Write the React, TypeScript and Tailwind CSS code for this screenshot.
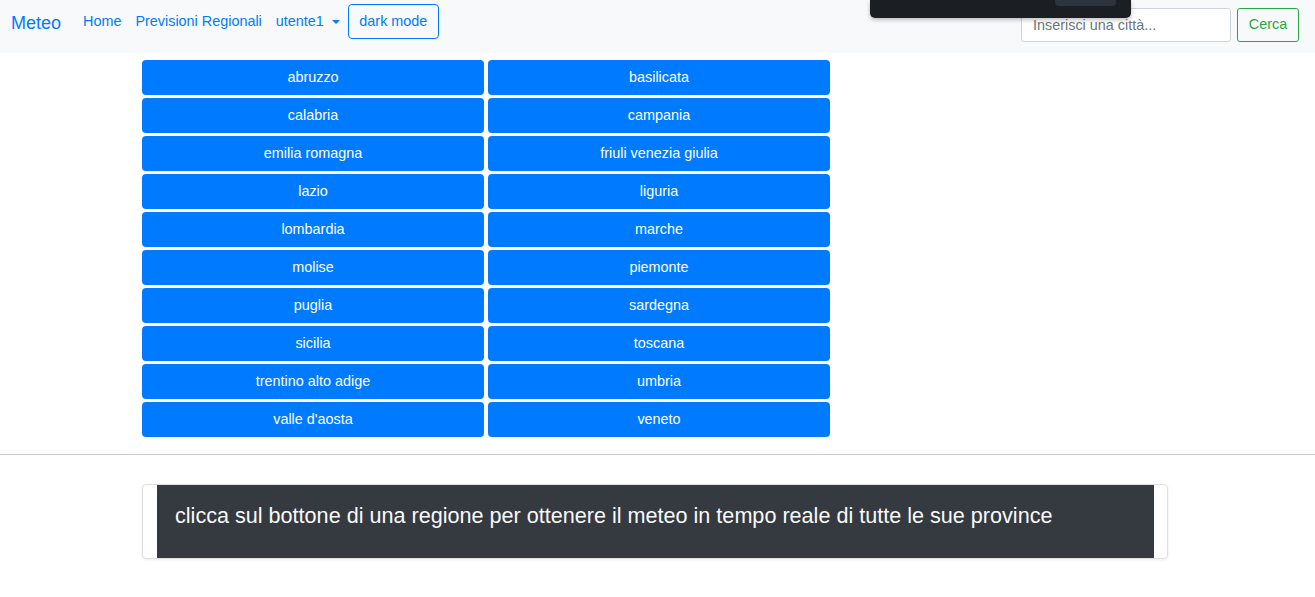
import React from 'react';

const regioni = [
  'abruzzo', 'basilicata', 'calabria', 'campania', 'emilia romagna', 'friuli venezia giulia',
  'lazio', 'liguria', 'lombardia', 'marche', 'molise', 'piemonte', 'puglia', 'sardegna',
  'sicilia', 'toscana', 'trentino alto adige', 'umbria', "valle d'aosta", 'veneto',
];

const App: React.FC = () => {
  return (
    <div className="relative min-h-[597px] bg-white text-[#212529]" style={{ fontFamily: '"Liberation Sans", Arial, sans-serif' }}>
      {/* Navbar */}
      <nav className="flex h-[53px] items-start bg-[#f8f9fa] pl-[11px] pr-[16px]">
        <a className="mt-[12px] text-[18px] leading-[22px] text-[#007bff]">Meteo</a>
        <ul className="ml-[22px] mt-[11px] flex items-center text-[14.4px] leading-[20px] text-[#007bff]">
          <li>Home</li>
          <li className="ml-[14px]">Previsioni Regionali</li>
          <li className="ml-[14px] flex items-center">
            utente1
            <span className="ml-[8px] mt-[1px] h-0 w-0 border-x-[4px] border-t-[4.5px] border-x-transparent border-t-[#007bff]" />
          </li>
        </ul>
        <button className="ml-[8px] mt-[4px] h-[35px] w-[91px] rounded-[4px] border border-[#007bff] text-[14.4px] text-[#007bff]">
          dark mode
        </button>
        <form className="ml-auto mt-[8px] flex">
          <input
            className="h-[34px] w-[210px] rounded-[3px] border border-[#ced4da] bg-white px-[11px] text-[14.4px] placeholder:text-[#6c757d]"
            placeholder="Inserisci una città..."
          />
          <button className="ml-[6px] h-[34px] w-[62px] rounded-[3px] border border-[#28a745] text-[14.4px] text-[#28a745]">
            Cerca
          </button>
        </form>
      </nav>

      {/* overlay popup */}
      <div className="absolute left-[870px] top-0 h-[18px] w-[261px] rounded-b-[5px] bg-[#1b1e22] shadow-[0_2px_4px_rgba(0,0,0,0.25)]">
        <div className="absolute left-[185px] top-0 h-[6px] w-[61px] rounded-b-[4px] bg-[#2c343d]" />
      </div>

      {/* Regioni */}
      <div className="ml-[142px] mt-[7px] grid w-[688px] grid-cols-2 gap-x-[4px] gap-y-[3px]">
        {regioni.map((r) => (
          <button key={r} className="h-[35px] rounded-[4px] bg-[#007bff] pt-[1px] text-[14.4px] text-white">
            {r}
          </button>
        ))}
      </div>

      <hr className="mt-[17px] border-t border-[#cccccc]" />

      {/* Card info */}
      <div className="ml-[142px] mt-[29px] w-[1026px] rounded-[4px] border border-[#dfdfdf] pl-[14px] pr-[13px] shadow-[0_1px_3px_rgba(0,0,0,0.08)]">
        <div className="bg-[#343a40] pb-[30px] pl-[18px] pt-[18px] text-[21.6px] leading-[25px] text-[#f8f9fa]">
          clicca sul bottone di una regione per ottenere il meteo in tempo reale di tutte le sue province
        </div>
      </div>
    </div>
  );
};

export default App;
